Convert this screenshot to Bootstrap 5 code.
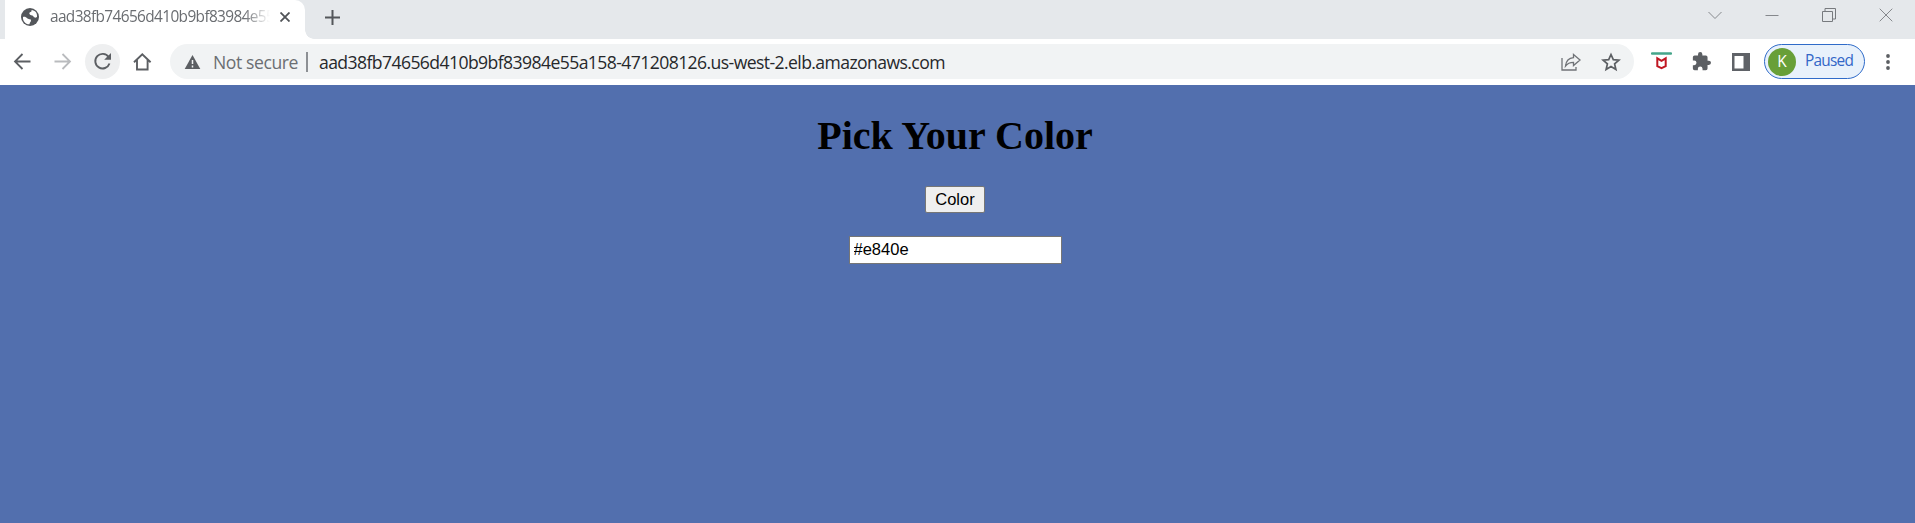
<!DOCTYPE html>
<html lang="en">
<head>
<meta charset="utf-8">
<title>Pick Your Color</title>
<meta name="viewport" content="width=device-width, initial-scale=1">
<link href="https://cdn.jsdelivr.net/npm/bootstrap@5.3.0/dist/css/bootstrap.min.css" rel="stylesheet">
<style>
  body { font-family: "Open Sans", "Noto Sans", sans-serif; background: #526fae; overflow: hidden; }
  svg { display: block; flex: none; }
  .strip { height: 39px; background: #e5e8eb; padding-left: 5px; padding-right: 22px; }
  .tab { width: 300px; height: 39px; padding: 0 15px 5px 15px; background: #fff; border-radius: 0 10px 0 0; }
  .tab-flare { width: 9px; height: 9px; background: radial-gradient(circle at 100% 0, transparent 8.5px, #fff 9px); }
  .tab-title { width: 220px; margin-left: 10px; font-size: 15.4px; line-height: 20px; color: #6a6d71; letter-spacing: -.62px;
    -webkit-mask-image: linear-gradient(90deg, #000 88%, transparent 100%); mask-image: linear-gradient(90deg, #000 88%, transparent 100%); }
  .winctl { gap: 43px; padding-bottom: 10px; }
  .toolbar { height: 46px; background: #fff; padding: 5px 21px 6px 12px; }
  .reload { width: 35px; height: 35px; background: #eeeff0; margin-left: 12px; }
  .omnibox { height: 35px; width: 1464px; margin-left: 17px; padding: 0 13px 0 14px; background: #f1f3f4; }
  .omnibox span { white-space: nowrap; line-height: 24px; }
  .secure { font-size: 17.6px; color: #6b6e72; width: 83px; margin-left: 12px; letter-spacing: -.42px; }
  .divider { width: 2px; height: 20px; background: #8d9094; margin: 0 11px 0 10px; }
  .url { font-size: 17.6px; color: #26282b; letter-spacing: -.59px; }
  .profile { width: 101px; height: 35px; border: 1.5px solid #2f6bc9; background: #e8f1fb; padding-left: 3px; color: #3367c8; font-size: 15.4px; }
  .paused { letter-spacing: -.75px; line-height: 20px; margin-bottom: 1px; }
  .avatar { width: 28px; height: 28px; background: #689f38; color: #fff; font-size: 15.5px; margin-right: 9px; }
  h1 { font: bold 40px/46px "Liberation Serif", serif; color: #000; margin: 28px 0 0; }
  .page { padding-right: 5px; }
  .color-btn { width: 60px; height: 27px; margin-top: 27px; border: 1px solid #767676; border-radius: 2px; background: #efefef; color: #000; font: 16.5px/22px "Liberation Sans", sans-serif; padding: 0 0 2px; }
  .color-input { width: 213px; height: 28px; margin-top: 23px; border: 1px solid #767676; background: #fff; color: #000; font: 16.5px/24px "Liberation Sans", sans-serif; padding: 0 4px 2px; border-radius: 0; }
</style>
</head>
<body>
<header>
  <div class="strip d-flex align-items-center">
    <div class="tab d-flex align-items-center">
      <svg width="20" height="20" viewBox="0 0 20 20"><circle cx="10" cy="10" r="9" fill="#54575b"/><path d="M3 10c2-.5 3 .3 4.500 1.500s3.500 0 3.500 2-1.500 1.500-1.500 3.800C5.500 17.500 2.500 14 3 10zM11.500 3c.5 1.500-.8 2-1.800 2.500s0 2 .8 2.500 2.500 0 3 1.500 2 1.500 3.500.5C17.500 6 15 3.300 11.500 3z" fill="#fff"/></svg>
      <span class="tab-title text-nowrap overflow-hidden">aad38fb74656d410b9bf83984e55a</span>
      <svg class="ms-auto" width="10" height="10" viewBox="0 0 10 10"><path d="M.5.5l9 9m0-9l-9 9" stroke="#505357" stroke-width="1.800"/></svg>
    </div>
    <div class="tab-flare align-self-end"></div>
    <svg style="margin:0 0 5px 11px" width="15" height="15" viewBox="0 0 15 15"><path d="M7.500 0v15M0 7.500h15" stroke="#54575b" stroke-width="2"/></svg>
    <div class="winctl d-flex align-items-center ms-auto">
      <svg width="14" height="14" viewBox="0 0 14 14" fill="none" stroke="#85888c"><path d="M.5 4l6.500 6.500L13.500 4"/></svg>
      <svg width="14" height="14" viewBox="0 0 14 14" stroke="#85888c"><path d="M.5 7.500h13"/></svg>
      <svg width="14" height="14" viewBox="0 0 14 14" fill="none" stroke="#777a7e"><path d="M.5 3.500h10v10H.5zM3 3V.5h10.500V11H11"/></svg>
      <svg width="14" height="14" viewBox="0 0 14 14" stroke="#85888c"><path d="M.7.700l12.600 12.600m0-12.600L.7 13.300"/></svg>
    </div>
  </div>

  <div class="toolbar d-flex align-items-center">
    <svg width="20" height="20" viewBox="0 0 20 20" fill="none" stroke="#5c5f63" stroke-width="1.800"><path d="M18.500 9.500H3.500M10.500 2L3 9.500l7.500 7.500"/></svg>
    <svg style="margin-left:21px" width="20" height="20" viewBox="0 0 20 20" fill="none" stroke="#b9bbbe" stroke-width="1.800"><path d="M1.500 9.500h15M9.500 2L17 9.500 9.500 17"/></svg>
    <div class="reload rounded-circle d-flex align-items-center justify-content-center">
      <svg width="19" height="19" viewBox="0 0 19 19"><path d="M15.600 5A7.300 7.300 0 1 0 16.500 11.500" fill="none" stroke="#5c5f63" stroke-width="1.900"/><path d="M18 1v6.800h-6.800z" fill="#5c5f63"/></svg>
    </div>
    <svg style="margin-left:12px;margin-right:1px" width="20" height="20" viewBox="0 0 20 20"><path d="M2 10.200L10.300 2.300l8.300 7.900M5 8v9.500h10.600V8" fill="none" stroke="#5c5f63" stroke-width="1.900"/></svg>
    <div class="omnibox rounded-pill d-flex align-items-center">
      <svg width="17" height="16" viewBox="0 0 17 16"><path d="M8.500 1L16.300 15H.7z" fill="#5c5f63"/><path d="M8.500 6v4M8.500 11.500v2" stroke="#f1f3f4" stroke-width="1.500"/></svg>
      <span class="secure">Not secure</span>
      <div class="divider"></div>
      <span class="url">aad38fb74656d410b9bf83984e55a158-471208126.us-west-2.elb.amazonaws.com</span>
      <svg class="ms-auto" width="20" height="18" viewBox="0 0 20 18" fill="none" stroke="#707377" stroke-width="1.300"><path d="M1 5v12h14v-3M12.500 1.500L19 7l-6.500 5.500V9.300C9 9.300 6.500 10.300 4.500 13c.5-4.500 3-7.800 8-8.300z"/></svg>
      <svg style="margin-left:20px" width="20" height="20" viewBox="0 0 20 20" fill="none" stroke="#5c5f63" stroke-width="1.700"><path d="M10 2.500l2.300 5.200 5.600.5-4.300 3.700 1.300 5.600-4.900-3-4.900 3 1.300-5.600L2.100 8.200l5.600-.5z"/></svg>
    </div>
    <svg style="margin-left:17px" width="21" height="20" viewBox="0 0 21 20"><path d="M1 1.500h19" stroke="#45a58a" stroke-width="2.500" stroke-linecap="round"/><path d="M6.300 6.300v7.900l4.200 1.900 4.200-1.900V6.300l-4.200 2.600z" fill="none" stroke="#c01722" stroke-width="2"/></svg>
    <svg style="margin-left:20px" width="19" height="19" viewBox="1 1 22 22"><path d="M20.500 11H19V7a2 2 0 0 0-2-2h-4V3.500a2.500 2.500 0 0 0-5 0V5H4a2 2 0 0 0-2 2v3.800h1.500a2.700 2.700 0 0 1 0 5.400H2V20a2 2 0 0 0 2 2h3.800v-1.500a2.700 2.700 0 0 1 5.400 0V22H17a2 2 0 0 0 2-2v-4h1.500a2.500 2.500 0 0 0 0-5z" fill="#5c5f63"/></svg>
    <svg style="margin-left:21px" width="18" height="18" viewBox="0 0 18 18"><path d="M0 0h18v18H0zM2.500 3v12.500h9V3z" fill-rule="evenodd" fill="#5f6267"/></svg>
    <div class="profile rounded-pill d-flex align-items-center" style="margin-left:14px">
      <span class="avatar rounded-circle d-flex align-items-center justify-content-center">K</span><span class="paused">Paused</span>
    </div>
    <svg class="ms-auto" width="10" height="18" viewBox="0 0 10 18" fill="#5c5f63"><circle cx="4" cy="3" r="1.900"/><circle cx="4" cy="9" r="1.900"/><circle cx="4" cy="15" r="1.900"/></svg>
  </div>
</header>
<main class="page d-flex flex-column align-items-center">
  <h1>Pick Your Color</h1>
  <button class="color-btn" type="button">Color</button>
  <input class="color-input" type="text" value="#e840e" aria-label="Color value">
</main>
<script src="https://cdn.jsdelivr.net/npm/bootstrap@5.3.0/dist/js/bootstrap.bundle.min.js"></script>
</body>
</html>
